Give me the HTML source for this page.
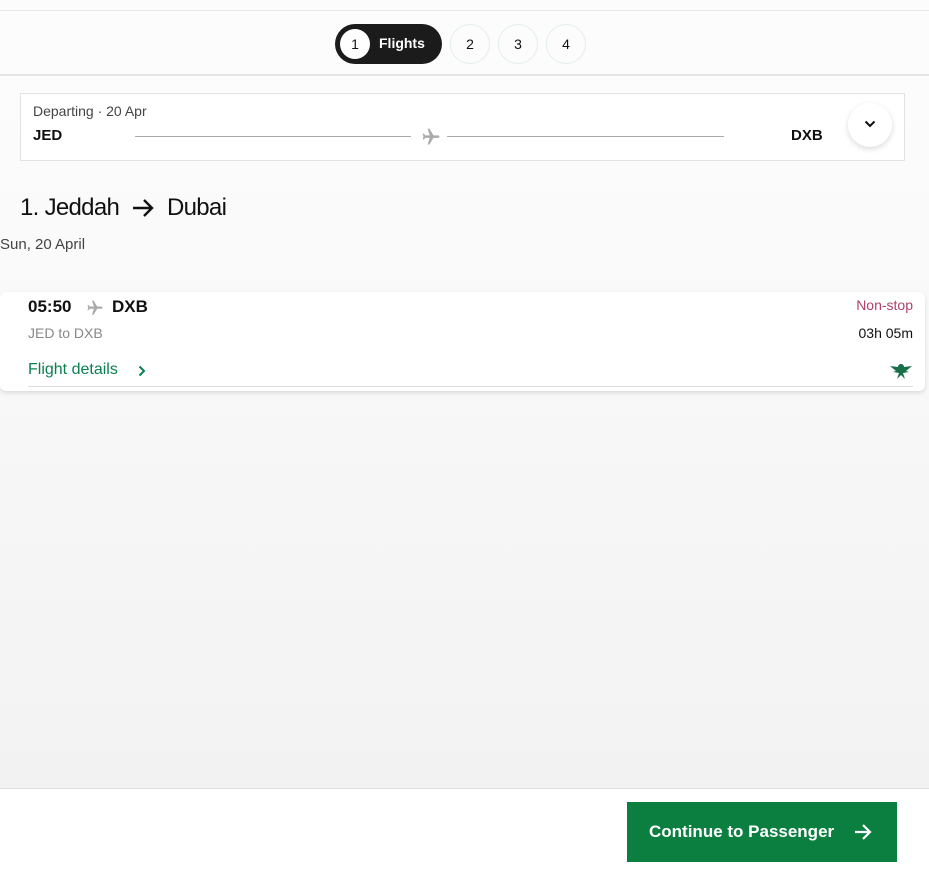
<!DOCTYPE html>
<html><head><meta charset="utf-8"><style>
*{box-sizing:border-box;margin:0;padding:0}
body{width:929px;height:873px;overflow:hidden;font-family:"Liberation Sans",Arial,sans-serif;background:linear-gradient(#fcfcfc 80px,#f9f9f9 300px,#f2f2f2 788px);position:relative;color:#111}
.top{position:absolute;left:0;top:10px;width:929px;height:66px;border-top:1px solid #e6e6e6;border-bottom:2px solid #e4e4e4;background:#fcfcfc}
.pill{position:absolute;left:335px;top:13px;width:107px;height:40px;border-radius:20px;background:#1b1b1b;color:#fff;font-weight:bold;font-size:14px}
.pill .c{position:absolute;left:5px;top:5px;width:30px;height:30px;border-radius:50%;background:#fff;color:#111;font-weight:normal;text-align:center;line-height:30px;font-size:14px}
.pill span{position:absolute;left:44px;top:11px}
.st{position:absolute;top:13px;width:40px;height:40px;border-radius:50%;border:1px solid #e3eeec;text-align:center;line-height:38px;font-size:14px;background:#fcfcfc}
.box{position:absolute;left:20px;top:93px;width:885px;height:68px;border:1px solid #e2e2e2;background:#fff}
.abs{position:absolute}
.card{position:absolute;left:0;top:292px;width:925px;height:99px;background:#fff;border-radius:6px;box-shadow:0 2px 4px rgba(0,0,0,.12)}
.foot{position:absolute;left:0;top:788px;width:929px;height:85px;background:#fff;border-top:1px solid #ddd}
.btn{position:absolute;left:627px;top:13px;width:270px;height:60px;background:#0a7f40;color:#fff;font-weight:bold;font-size:17px;line-height:60px;padding-left:22px}
</style></head><body>
<div class="top">
 <div class="pill"><div class="c">1</div><span>Flights</span></div>
 <div class="st" style="left:450px">2</div>
 <div class="st" style="left:498px">3</div>
 <div class="st" style="left:546px">4</div>
</div>
<div class="box">
 <div class="abs" style="left:12px;top:9px;font-size:14px;color:#444">Departing · 20 Apr</div>
 <div class="abs" style="left:12px;top:33px;font-size:15px;font-weight:bold">JED</div>
 <div class="abs" style="left:114px;top:42px;width:276px;height:1px;background:#aaa"></div>
 <svg class="abs" style="left:400px;top:33px" width="20" height="20" viewBox="0 0 24 24"><path fill="#aaa" d="M21 16v-2l-8-5V3.5a1.5 1.5 0 0 0-3 0V9l-8 5v2l8-2.5V19l-2 1.5V22l3.5-1 3.5 1v-1.5L13 19v-5.5z" transform="rotate(90 12 12)"/></svg>
 <div class="abs" style="left:426px;top:42px;width:277px;height:1px;background:#aaa"></div>
 <div class="abs" style="left:770px;top:33px;font-size:15px;font-weight:bold">DXB</div>
 <div class="abs" style="left:827px;top:9px;width:44px;height:44px;border-radius:50%;background:#fff;box-shadow:0 2px 6px rgba(0,0,0,.15)"><svg style="position:absolute;left:16px;top:17px" width="12" height="8" viewBox="0 0 12 8"><path d="M1.5 1.5 6 6l4.5-4.5" fill="none" stroke="#111" stroke-width="2"/></svg></div>
</div>
<div class="abs" style="left:20px;top:194px;font-size:24px;letter-spacing:-0.7px">1. Jeddah</div>
<svg class="abs" style="left:131px;top:198px" width="24" height="20" viewBox="0 0 24 20"><path d="M2 10h19M13 2l8 8-8 8" fill="none" stroke="#111" stroke-width="2.4"/></svg>
<div class="abs" style="left:167px;top:194px;font-size:24px;letter-spacing:-0.7px">Dubai</div>
<div class="abs" style="left:0;top:236px;font-size:15px;color:#444">Sun, 20 April</div>
<div class="card">
 <div class="abs" style="left:28px;top:5px;font-size:17px;font-weight:bold">05:50</div>
 <svg class="abs" style="left:86px;top:7px" width="18" height="18" viewBox="0 0 24 24"><path fill="#aaa" d="M21 16v-2l-8-5V3.5a1.5 1.5 0 0 0-3 0V9l-8 5v2l8-2.5V19l-2 1.5V22l3.5-1 3.5 1v-1.5L13 19v-5.5z" transform="rotate(90 12 12)"/></svg>
 <div class="abs" style="left:112px;top:5px;font-size:17px;font-weight:bold">DXB</div>
 <div class="abs" style="left:28px;top:33px;font-size:14px;color:#888">JED to DXB</div>
 <div class="abs" style="left:28px;top:69px;font-size:16px;color:#0a7f50">Flight details</div>
 <svg class="abs" style="left:137px;top:73px" width="10" height="12" viewBox="0 0 10 12"><path d="M2.5 1.5 7 6l-4.5 4.5" fill="none" stroke="#0a7f50" stroke-width="2"/></svg>
 <div class="abs" style="right:12px;top:5px;font-size:14px;color:#b0406a">Non-stop</div>
 <div class="abs" style="right:12px;top:33px;font-size:14px">03h 05m</div>
 <svg class="abs" style="left:889px;top:70px" width="24" height="20" viewBox="0 0 24 20"><path fill="#17704a" d="M12 2c2 0 3 1.5 3 3l8-1-6 5 3 1-6 1 2 6-4-4-4 4 2-6-6-1 3-1-6-5 8 1c0-1.5 1-3 3-3z"/></svg>
 <div class="abs" style="left:28px;top:94px;width:885px;height:1px;background:#ddd"></div>
</div>
<div class="foot"><div class="btn">Continue to Passenger</div>
<svg class="abs" style="left:853px;top:34px" width="20" height="18" viewBox="0 0 20 18"><path d="M2 9h15M10 2l7 7-7 7" fill="none" stroke="#fff" stroke-width="2.2"/></svg></div>
</body></html>
